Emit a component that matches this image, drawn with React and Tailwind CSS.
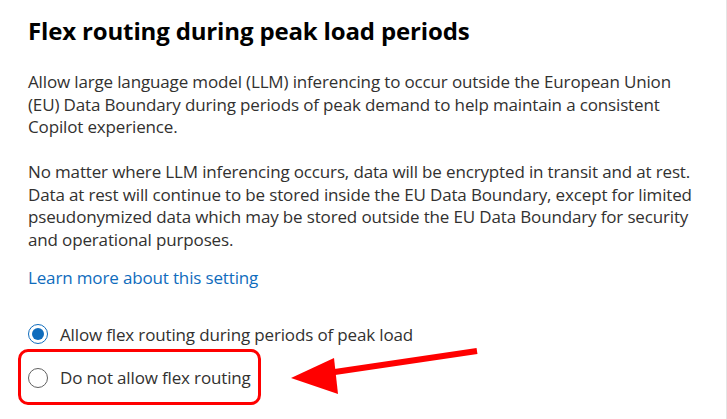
import React from "react";

function Radio({ checked, label }) {
  return (
    <label className="flex items-center gap-[12px]">
      <span
        className={
          checked
            ? "w-[20px] h-[20px] rounded-full border border-[#0f6cbd] flex items-center justify-center"
            : "w-[20px] h-[20px] rounded-full border border-[#616161] flex items-center justify-center"
        }
      >
        {checked && <span className="w-[12px] h-[12px] rounded-full bg-[#0f6cbd]" />}
      </span>
      <span className="text-[17px] text-[#323130]">{label}</span>
    </label>
  );
}

export default function App() {
  return (
    <div
      className="relative w-[727px] h-[419px] bg-white overflow-hidden border-r border-[#e5e5e5]"
      style={{ fontFamily: "'Open Sans', 'Noto Sans', sans-serif" }}
    >
      <div className="pl-[28px] pt-[15px]">
        <h1 className="text-[24px] leading-[32px] font-bold text-black tracking-[-0.15px]">
          Flex routing during peak load periods
        </h1>

        <div className="mt-[24px] text-[17px] leading-[22.5px] text-[#323130] tracking-[-0.15px] whitespace-nowrap">
          <p>
            Allow large language model (LLM) inferencing to occur outside the European Union
            <br />
            (EU) Data Boundary during periods of peak demand to help maintain a consistent
            <br />
            Copilot experience.
          </p>
          <p className="mt-[22.5px]">
            No matter where LLM inferencing occurs, data will be encrypted in transit and at rest.
            <br />
            Data at rest will continue to be stored inside the EU Data Boundary, except for limited
            <br />
            pseudonymized data which may be stored outside the EU Data Boundary for security
            <br />
            and operational purposes.
          </p>
          <a href="#" className="block mt-[16px] text-[#0f6cbd]">
            Learn more about this setting
          </a>
        </div>

        <div className="mt-[32px] flex flex-col gap-[18px] tracking-[-0.15px]">
          <Radio checked label="Allow flex routing during periods of peak load" />
          <div className="relative">
            <div className="absolute left-[-10px] top-[-16px] w-[243px] h-[56px] border-[3px] border-[#ff0000] rounded-[10px]" />
            <Radio label="Do not allow flex routing" />
          </div>
        </div>
      </div>

      <svg className="absolute left-0 top-0" width="727" height="419" viewBox="0 0 727 419">
        <line x1="477" y1="351" x2="328" y2="373" stroke="#ff0000" strokeWidth="6" />
        <polygon points="291,378 334,358 338,394" fill="#ff0000" />
      </svg>
    </div>
  );
}
